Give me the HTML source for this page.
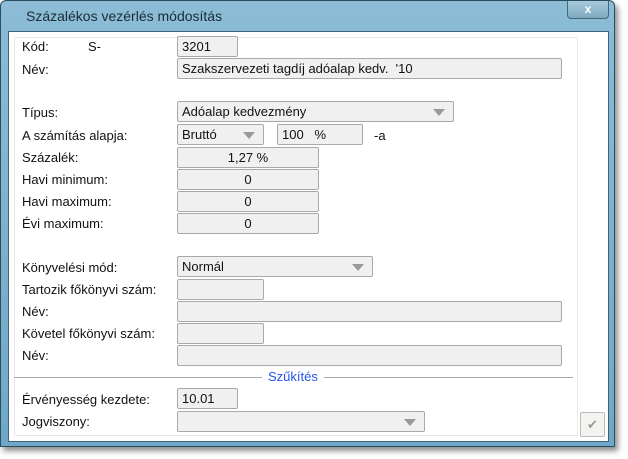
<!DOCTYPE html><html><head><meta charset="utf-8"><style>
body{margin:0;width:628px;height:459px;background:#fff;position:relative;overflow:hidden;font-family:"Liberation Sans",sans-serif;font-size:13px;color:#111}
.win{position:absolute;left:0;top:0;width:613px;height:445px;background:linear-gradient(#8cbcd6,#6fa8c6);border:1px solid #2b4d60;border-radius:6px 6px 0 0;box-shadow:3px 4px 6px rgba(0,0,0,.45)}
.title{position:absolute;left:25px;top:7px;color:#1c2b36;font-size:14px}
.close{position:absolute;left:566px;top:0;width:40px;height:17px;border:1px solid #44677a;border-top:none;border-radius:0 0 4px 4px;background:linear-gradient(#a9cadb,#7ea9bf);color:#fff;text-align:center;font-size:12px;line-height:16px;font-weight:bold}
.inner{position:absolute;left:7px;top:30px;width:599px;height:409px;background:#fff;border:1px solid #3d6478}
.panel{position:absolute;left:14px;top:37px;width:562px;height:397px;border:1px solid #e8e8e8}
.l{position:absolute;left:22px}
.b{position:absolute;border:1px solid #a9a9a9;border-radius:2px;background:#f0f0f0;box-sizing:border-box;height:21px;padding:1px 4px;line-height:17px}
.r{text-align:center}
.arr{position:absolute;right:8px;top:7px;width:0;height:0;border-left:6px solid transparent;border-right:6px solid transparent;border-top:7px solid #999}
</style></head><body>
<div class="win"><div class="title">Százalékos vezérlés módosítás</div><div class="close">x</div>
<div class="inner"></div></div>
<div class="panel"></div>
<div class="l" style="top:39px">Kód:</div><div style="position:absolute;left:88px;top:39px">S-</div>
<div class="b" style="left:177px;top:36px;width:61px">3201</div>
<div class="l" style="top:62px">Név:</div>
<div class="b" style="left:177px;top:58px;width:385px">Szakszervezeti tagdíj adóalap kedv.&nbsp; '10</div>
<div class="l" style="top:105px">Típus:</div>
<div class="b" style="left:177px;top:101px;width:277px">Adóalap kedvezmény<span class="arr"></span></div>
<div class="l" style="top:128px">A számítás alapja:</div>
<div class="b" style="left:177px;top:124px;width:87px">Bruttó<span class="arr"></span></div>
<div class="b" style="left:277px;top:124px;width:86px">100&nbsp;&nbsp;&nbsp;%</div>
<div style="position:absolute;left:374px;top:128px">-a</div>
<div class="l" style="top:150px">Százalék:</div><div class="b r" style="left:177px;top:147px;width:142px">1,27 %</div>
<div class="l" style="top:172px">Havi minimum:</div><div class="b r" style="left:177px;top:169px;width:142px">0</div>
<div class="l" style="top:194px">Havi maximum:</div><div class="b r" style="left:177px;top:191px;width:142px">0</div>
<div class="l" style="top:216px">Évi maximum:</div><div class="b r" style="left:177px;top:213px;width:142px">0</div>
<div class="l" style="top:260px">Könyvelési mód:</div>
<div class="b" style="left:177px;top:256px;width:196px">Normál<span class="arr"></span></div>
<div class="l" style="top:282px">Tartozik főkönyvi szám:</div><div class="b" style="left:177px;top:279px;width:87px"></div>
<div class="l" style="top:304px">Név:</div><div class="b" style="left:177px;top:301px;width:385px"></div>
<div class="l" style="top:326px">Követel főkönyvi szám:</div><div class="b" style="left:177px;top:323px;width:87px"></div>
<div class="l" style="top:348px">Név:</div><div class="b" style="left:177px;top:345px;width:385px"></div>
<div style="position:absolute;left:14px;top:377px;width:559px;height:1px;background:#aaa"></div>
<div style="position:absolute;left:262px;top:369px;padding:0 6px;background:#fff;color:#2255ee">Szűkítés</div>
<div class="l" style="top:392px">Érvényesség kezdete:</div><div class="b" style="left:177px;top:388px;width:61px">10.01</div>
<div class="l" style="top:414px">Jogviszony:</div><div class="b" style="left:177px;top:411px;width:248px"><span class="arr"></span></div>
<div style="position:absolute;left:580px;top:412px;width:23px;height:23px;border:1px solid #bbb;border-radius:2px;background:#f3f3f0;color:#999;text-align:center;line-height:23px;font-size:13px">✔</div>
</body></html>
